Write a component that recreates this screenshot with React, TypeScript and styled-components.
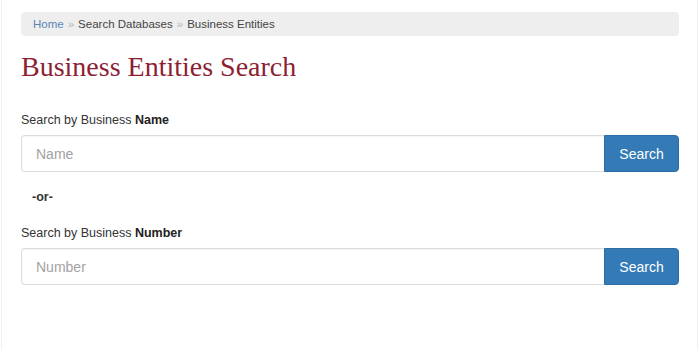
import React from "react";
import styled, { createGlobalStyle } from "styled-components";

const Global = createGlobalStyle`
  html, body { margin: 0; padding: 0; background: #fff; }
  body { font-family: "Liberation Sans", Arial, sans-serif; color: #333; }
  * { box-sizing: border-box; }
`;

const Page = styled.div`
  margin-left: 1px;
  width: 697px;
  height: 350px;
  border-left: 1px solid #f1f1f1;
  border-right: 1px solid #f1f1f1;
  padding: 12px 18px 0 19px;
`;

const Breadcrumb = styled.nav`
  display: flex;
  align-items: center;
  height: 24px;
  padding: 0 12px;
  background: #eeeeee;
  border-radius: 4px;
  font-size: 11.5px;
  color: #444;
`;

const Crumb = styled.span<{ $link?: boolean }>`
  color: ${(p) => (p.$link ? "#5a86b5" : "#444")};
`;

const Sep = styled.span`
  color: #b5b5b5;
  padding: 0 4px;
`;

const Title = styled.h1`
  margin: 15px 0 0;
  font-family: "Liberation Serif", "Times New Roman", serif;
  font-weight: normal;
  font-size: 28px;
  line-height: 32px;
  color: #8d1f33;
`;

const Label = styled.div<{ $top: number }>`
  margin-top: ${(p) => p.$top}px;
  font-size: 12.5px;
  line-height: 14px;
  color: #333;
  b { color: #222; }
`;

const Group = styled.div`
  display: flex;
  margin-top: 8px;
  height: 37px;
`;

const Input = styled.input`
  flex: 1;
  min-width: 0;
  height: 100%;
  border: 1px solid #dcdcdc;
  border-right: none;
  border-radius: 4px 0 0 4px;
  padding: 0 14px;
  font-family: "Liberation Sans", Arial, sans-serif;
  font-size: 14px;
  color: #555;
  outline: none;
  box-shadow: inset 0 1px 1px rgba(0, 0, 0, 0.04);
  &::placeholder { color: #a2a2a2; }
`;

const Button = styled.button`
  width: 75px;
  height: 100%;
  border: 1px solid #2e6da4;
  border-radius: 0 4px 4px 0;
  background: #337ab7;
  color: #fff;
  font-family: "Liberation Sans", Arial, sans-serif;
  font-size: 14px;
  padding: 0;
  cursor: pointer;
`;

const Or = styled.div`
  margin: 18px 0 0 11px;
  font-size: 12.5px;
  font-weight: bold;
  line-height: 14px;
  color: #333;
`;

const SearchRow = ({ placeholder }: { placeholder: string }) => (
  <Group>
    <Input placeholder={placeholder} />
    <Button>Search</Button>
  </Group>
);

export default function App() {
  return (
    <>
      <Global />
      <Page>
        <Breadcrumb>
          <Crumb $link>Home</Crumb>
          <Sep>»</Sep>
          <Crumb>Search Databases</Crumb>
          <Sep>»</Sep>
          <Crumb>Business Entities</Crumb>
        </Breadcrumb>
        <Title>Business Entities Search</Title>
        <Label $top={30}>
          Search by Business <b>Name</b>
        </Label>
        <SearchRow placeholder="Name" />
        <Or>-or-</Or>
        <Label $top={22}>
          Search by Business <b>Number</b>
        </Label>
        <SearchRow placeholder="Number" />
      </Page>
    </>
  );
}
